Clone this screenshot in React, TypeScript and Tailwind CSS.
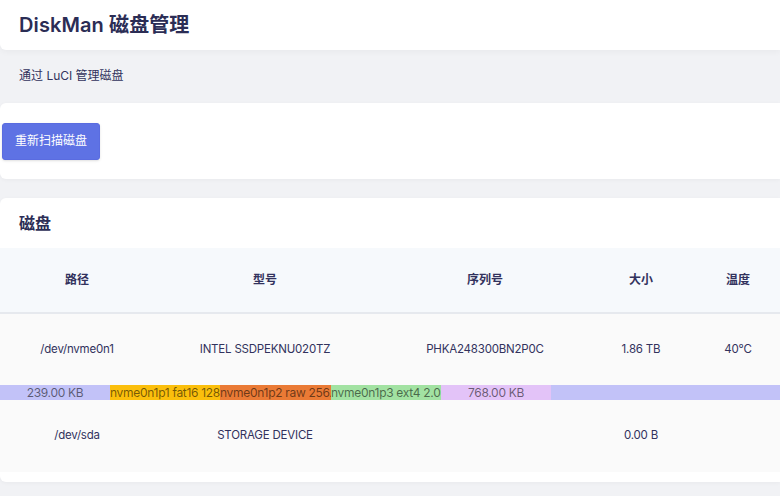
import React from 'react';

const font = { fontFamily: "Inter, 'Noto Sans CJK SC', sans-serif" };

const disks = [
  { path: '/dev/nvme0n1', model: 'INTEL SSDPEKNU020TZ', serial: 'PHKA248300BN2P0C', size: '1.86 TB', temp: '40°C' },
];

export default function App() {
  return (
    <div className="w-[780px] h-[496px] overflow-hidden bg-[#f1f2f5] text-[#32325d]" style={font}>
      {/* title card */}
      <div className="h-[50px] bg-white rounded-bl-[6px] shadow-[0_2px_6px_rgba(0,0,0,0.04)] flex items-center pl-[19px]">
        <h2 className="text-[20px] font-semibold text-[#2b2d55] tracking-[0.1px]">DiskMan 磁盘管理</h2>
      </div>
      <div className="h-[53px] flex items-center pl-[19px] text-[12px] text-[#32325d] pb-[1px]">通过 LuCI 管理磁盘</div>

      {/* rescan card */}
      <div className="h-[76px] bg-white rounded-l-[6px] shadow-[0_1px_4px_rgba(0,0,0,0.04)] flex items-center pl-[2px]">
        <button className="h-[37px] w-[98px] rounded-[3px] bg-[#5e72e4] border border-[#5a6ce0] text-white text-[12px] shadow-sm">
          重新扫描磁盘
        </button>
      </div>

      {/* disks card */}
      <div className="mt-[19px] bg-white rounded-l-[6px] pb-[10px] shadow-[0_1px_4px_rgba(0,0,0,0.04)]">
        <div className="h-[50px] flex items-center pl-[19px] text-[16px] font-bold text-[#2b2d55]">磁盘</div>
        <table className="table-fixed w-[788px] border-collapse text-[11.5px] tracking-[-0.2px]">
          <colgroup>
            <col className="w-[154px]" />
            <col className="w-[222px]" />
            <col className="w-[218px]" />
            <col className="w-[94px]" />
            <col className="w-[100px]" />
          </colgroup>
          <thead>
            <tr className="h-[65px] bg-[#f6f9fc] border-b-2 border-[#e6e9ee] text-[12px] tracking-normal">
              <th className="font-bold text-center">路径</th>
              <th className="font-bold text-center">型号</th>
              <th className="font-bold text-center">序列号</th>
              <th className="font-bold text-center">大小</th>
              <th className="font-bold text-center">温度</th>
            </tr>
          </thead>
          <tbody>
            {disks.map((d) => (
              <tr key={d.path} className="h-[72px] bg-[#fafafa]">
                <td className="text-center">{d.path}</td>
                <td className="text-center">{d.model}</td>
                <td className="text-center">{d.serial}</td>
                <td className="text-center">{d.size}</td>
                <td className="text-center">{d.temp}</td>
              </tr>
            ))}
            <tr className="bg-[#fafafa]">
              <td colSpan={5} className="p-0">
                <div className="flex h-[15px] text-[12px] leading-[15px] tracking-[-0.3px] text-black/55 whitespace-nowrap">
                  <div className="w-[110px] shrink-0 bg-[#c2c2f8] text-center overflow-hidden">239.00 KB</div>
                  <div className="w-[110px] shrink-0 bg-[#fbbf0c] overflow-hidden">nvme0n1p1 fat16 128</div>
                  <div className="w-[111px] shrink-0 bg-[#ea7a35] overflow-hidden">nvme0n1p2 raw 256.</div>
                  <div className="w-[110px] shrink-0 bg-[#a2e2a2] overflow-hidden">nvme0n1p3 ext4 2.0</div>
                  <div className="w-[110px] shrink-0 bg-[#e3c3f8] text-center overflow-hidden">768.00 KB</div>
                  <div className="flex-1 bg-[#c2c2f8]"></div>
                </div>
              </td>
            </tr>
            <tr className="h-[72px] bg-[#fafafa]">
              <td className="text-center">/dev/sda</td>
              <td className="text-center">STORAGE DEVICE</td>
              <td className="text-center"></td>
              <td className="text-center">0.00 B</td>
              <td className="text-center"></td>
            </tr>
          </tbody>
        </table>
      </div>
    </div>
  );
}
